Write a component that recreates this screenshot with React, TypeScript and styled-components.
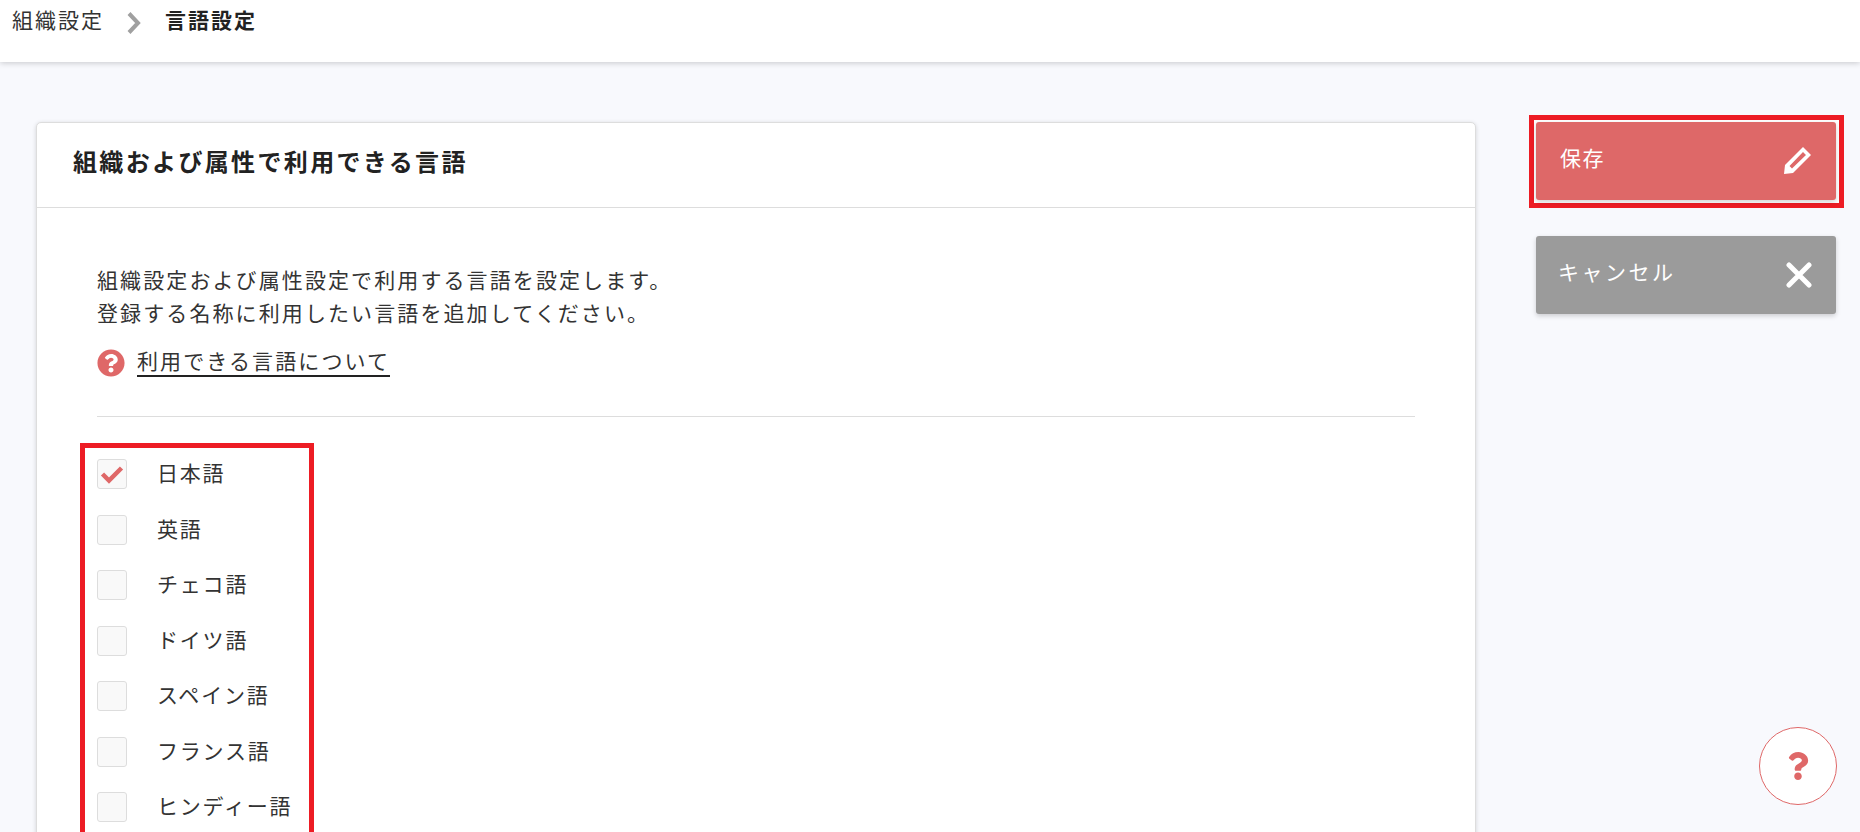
import React from "react";
import styled, { createGlobalStyle } from "styled-components";
import { FaQuestion, FaQuestionCircle } from "react-icons/fa";

const Global = createGlobalStyle`
  html, body { margin: 0; padding: 0; height: 832px; overflow: hidden; background: #f8f9fd; }
  body { font-family: Roboto, "Noto Sans CJK JP", sans-serif; color: #222; }
`;
const Page = styled.div`
  height: 832px;
  overflow: hidden;
  display: flex;
  flex-direction: column;
  position: relative;
`;
const TopBar = styled.header`
  height: 62px;
  flex: none;
  background: #fff;
  box-shadow: 0 1px 6px rgba(0, 0, 0, 0.2);
  display: flex;
  align-items: flex-start;
  padding: 6px 0 0 12px;
  box-sizing: border-box;
  font-size: 21px;
  line-height: 30px;
  letter-spacing: 2px;
`;
const Crumb = styled.span`
  color: #333;
`;
const CrumbCurrent = styled.span`
  font-weight: 700;
  color: #222;
`;
const CrumbSep = styled.svg`
  width: 14px;
  height: 22px;
  margin: 6px 24px 0 23px;
  fill: none;
  stroke: #a0a0a0;
  stroke-width: 4;
`;
const Main = styled.main`
  flex: 1;
  min-height: 0;
  display: flex;
  align-items: flex-start;
  padding: 60px 24px 0 36px;
`;
const Card = styled.section`
  width: 1440px;
  flex: none;
  box-sizing: border-box;
  background: #fff;
  border: 1px solid #ddd;
  border-radius: 5px;
  box-shadow: 0 1px 4px rgba(0, 0, 0, 0.16);
`;
const CardHead = styled.h2`
  margin: 0;
  height: 85px;
  box-sizing: border-box;
  padding: 22px 36px 0;
  border-bottom: 1px solid #ddd;
  font-size: 24px;
  line-height: 36px;
  font-weight: 700;
  letter-spacing: 2.35px;
  color: #222;
`;
const CardBody = styled.div`
  padding: 57px 60px 0;
`;
const Lead = styled.p`
  margin: 0;
  font-size: 21px;
  line-height: 33px;
  letter-spacing: 2.1px;
  color: #333;
`;
const HelpLink = styled.a`
  display: flex;
  align-items: center;
  gap: 12px;
  margin-top: 18px;
  font-size: 21px;
  line-height: 30px;
  letter-spacing: 2.1px;
  color: #333;
  svg {
    width: 28px;
    height: 28px;
    color: #df6868;
    flex: none;
  }
`;
const LinkText = styled.span`
  border-bottom: 2px solid #222;
  line-height: 26px;
`;
const Divider = styled.hr`
  margin: 39px 0 0;
  border: none;
  border-top: 1px solid #ddd;
`;
const LangList = styled.ul`
  list-style: none;
  width: 234px;
  box-sizing: border-box;
  margin: 26px 0 0 -17px;
  padding: 11px 12px 20px;
  border: 5px solid #ed1c24;
  display: flex;
  flex-direction: column;
  gap: 25.5px;
`;
const LangRow = styled.li`
  height: 30px;
  display: flex;
  align-items: center;
  gap: 30px;
  font-size: 21px;
  letter-spacing: 1.8px;
  color: #333;
  white-space: nowrap;
`;
const LangLabel = styled.span`
  margin-top: -4px;
`;
const Box = styled.span`
  width: 30px;
  height: 30px;
  flex: none;
  box-sizing: border-box;
  border: 1px solid #ddd;
  border-radius: 3px;
  background: #f9f9f9;
  display: flex;
  align-items: center;
  justify-content: center;
`;
const Side = styled.aside`
  margin-left: 60px;
  width: 300px;
  flex: none;
  display: flex;
  flex-direction: column;
`;
const SaveFrame = styled.div`
  margin: -7px 0 0 -7px;
  width: 315px;
  box-sizing: border-box;
  border: 5px solid #ed1c24;
  padding: 2px 3px 3px 2px;
  background: #fff;
`;
const ActionButton = styled.button<{ $bg: string }>`
  width: 300px;
  height: 78px;
  border: none;
  border-radius: 3px;
  background: ${(p) => p.$bg};
  color: #fff;
  font: inherit;
  font-size: 21px;
  letter-spacing: 1.6px;
  display: flex;
  align-items: center;
  justify-content: space-between;
  padding: 0 24px 0 24px;
  box-shadow: 0 2px 5px rgba(0, 0, 0, 0.18);
`;
const ButtonLabel = styled.span`
  margin-top: -9px;
`;
const CancelLabel = styled(ButtonLabel)`
  margin-left: -2px;
  letter-spacing: 2.5px;
`;
const CancelButton = styled(ActionButton)`
  margin-top: 28px;
`;
const FloatHelp = styled.button`
  position: absolute;
  left: 1759px;
  top: 727px;
  width: 78px;
  height: 78px;
  border-radius: 50%;
  border: 1px solid #df6868;
  background: #fff;
  color: #df6868;
  font-size: 28px;
  display: flex;
  align-items: center;
  justify-content: center;
  padding: 0;
`;

const languages = ["日本語", "英語", "チェコ語", "ドイツ語", "スペイン語", "フランス語", "ヒンディー語"];

export default function App() {
  return (
    <Page>
      <Global />
      <TopBar>
        <Crumb>組織設定</Crumb>
        <CrumbSep viewBox="0 0 14 22">
          <path d="M2 1.500l9 9.500-9 9.500" />
        </CrumbSep>
        <CrumbCurrent>言語設定</CrumbCurrent>
      </TopBar>
      <Main>
        <Card>
          <CardHead>組織および属性で利用できる言語</CardHead>
          <CardBody>
            <Lead>
              組織設定および属性設定で利用する言語を設定します。
              <br />
              登録する名称に利用したい言語を追加してください。
            </Lead>
            <HelpLink>
              <FaQuestionCircle />
              <LinkText>利用できる言語について</LinkText>
            </HelpLink>
            <Divider />
            <LangList>
              {languages.map((l, i) => (
                <LangRow key={l}>
                  <Box>
                    {i === 0 && (
                      <svg width="24" height="20" viewBox="0 0 24 20" fill="none">
                        <path d="M2.500 10l6.500 6.500L21.500 4" stroke="#df6868" strokeWidth="4.500" />
                      </svg>
                    )}
                  </Box>
                  <LangLabel>{l}</LangLabel>
                </LangRow>
              ))}
            </LangList>
          </CardBody>
        </Card>
        <Side>
          <SaveFrame>
            <ActionButton $bg="#de6868">
              <ButtonLabel>保存</ButtonLabel>
              <svg width="28" height="28" viewBox="0 0 28 28">
                <path
                  fillRule="evenodd"
                  fill="#fff"
                  d="M19 0l8 8L9 26l-9 1 1-9zM19 5l3 3L8 21.500 5.500 19z"
                />
              </svg>
            </ActionButton>
          </SaveFrame>
          <CancelButton $bg="#9b9b9b">
            <CancelLabel>キャンセル</CancelLabel>
            <svg width="26" height="26" viewBox="0 0 26 26" fill="none">
              <path d="M3 3l20 20M23 3L3 23" stroke="#fff" strokeWidth="5" strokeLinecap="round" />
            </svg>
          </CancelButton>
        </Side>
      </Main>
      <FloatHelp>
        <FaQuestion />
      </FloatHelp>
    </Page>
  );
}
